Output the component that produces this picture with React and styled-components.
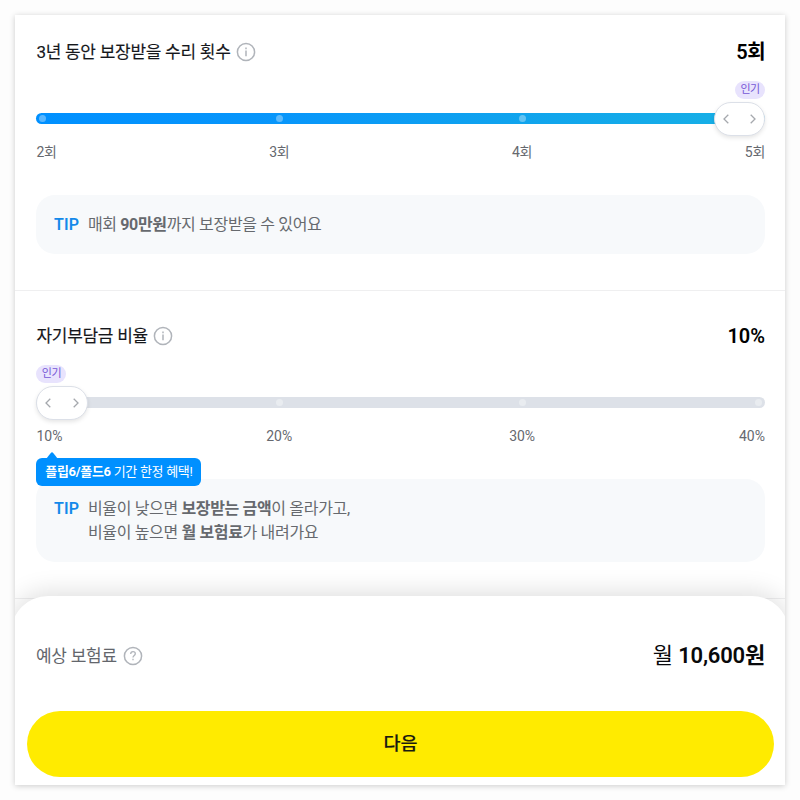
import React from "react";
import styled, { createGlobalStyle } from "styled-components";

const GlobalStyle = createGlobalStyle`
  * { box-sizing: border-box; }
  body {
    margin: 0;
    background: #fdfdfd;
    font-family: Roboto, "Noto Sans CJK KR", sans-serif;
    color: #111317;
  }
`;

const Page = styled.div`
  height: 800px;
  padding: 15px;
`;

const Card = styled.main`
  display: flex;
  flex-direction: column;
  height: 770px;
  overflow: hidden;
  background: #fff;
  box-shadow: 0 1px 6px rgba(0, 0, 0, 0.2);
`;

const Section = styled.section`
  flex: none;
  height: ${(p) => p.$height}px;
  padding: ${(p) => p.$top}px 20px 0 21.4px;
  border-bottom: 1px solid #efeff0;
`;

const Header = styled.header`
  display: flex;
  align-items: center;
  justify-content: space-between;
  height: 30px;
`;

const TitleGroup = styled.div`
  display: flex;
  align-items: center;
  gap: ${(p) => p.$gap || 5}px;
`;

const Title = styled.h2`
  margin: 0;
  font-size: 17px;
  line-height: 30px;
  font-weight: 400;
  letter-spacing: -0.27px;
  color: ${(p) => (p.$muted ? "#63666c" : "#15171b")};
  -webkit-text-stroke: ${(p) => (p.$muted ? 0 : 0.15)}px currentColor;
`;

const Value = styled.strong`
  font-size: 20px;
  line-height: 30px;
  font-weight: 600;
  letter-spacing: ${(p) => p.$tracking || 0}px;
  color: #000;
`;

const IconSvg = styled.svg`
  display: block;
  width: 20px;
  height: 20px;
  fill: none;
  stroke: #b0b4ba;
  stroke-width: 1.5;
`;

const BadgeRow = styled.div`
  display: flex;
  justify-content: ${(p) => (p.$end ? "flex-end" : "flex-start")};
  margin-top: 13.5px;
`;

const Badge = styled.span`
  width: 30px;
  height: 18px;
  border-radius: 9px;
  background: #e8e3fd;
  color: #7657d6;
  font-size: 11px;
  line-height: 18px;
  letter-spacing: -0.6px;
  text-align: center;
`;

const Slider = styled.div`
  display: grid;
  align-items: center;
  height: 34px;
  margin-top: 3px;
  > * { grid-area: 1 / 1; }
`;

/* Stops sit on thirds of the track, with the outer two flush to its ends. */
const Stops = styled.div`
  display: grid;
  grid-template-columns: 1fr 2fr 2fr 1fr;
  justify-items: center;
  > :first-child { justify-self: start; }
  > :last-child { justify-self: end; }
`;

const Track = styled(Stops)`
  align-items: center;
  height: 11px;
  border-radius: 6px;
  background: ${(p) => (p.$filled ? "linear-gradient(90deg, #0090ff 0%, #0896fa 34%, #10a4ed 67%, #18b1e5 100%)" : "#dde1e8")};
`;

const Dot = styled.i`
  width: 7px;
  height: 7px;
  margin: 0 3px;
  border-radius: 50%;
  background: ${(p) => (p.$filled ? "rgba(255,255,255,.35)" : "#e9ecf0")};
`;

const Thumb = styled.div`
  display: flex;
  align-items: center;
  justify-content: space-between;
  justify-self: ${(p) => (p.$end ? "end" : "start")};
  width: 51.5px;
  height: 34px;
  padding: 0 8px;
  border: 1px solid #dce0e8;
  border-radius: 17px;
  background: #fff;
  box-shadow: 0 2px 4px rgba(0, 0, 0, 0.1);
`;

const Chevron = styled.svg`
  width: 6px;
  height: 10px;
  fill: none;
  stroke: #a5a8ad;
  stroke-width: 1.3;
`;

const Labels = styled(Stops)`
  height: 22px;
  margin-top: 5px;
  font-size: 14px;
  line-height: 22px;
  color: #66696f;
  letter-spacing: ${(p) => p.$tracking}px;
`;

const Callout = styled.div`
  position: absolute;
  left: 0;
  top: -21px;
  width: 165px;
  height: 28px;
  border-radius: 6px;
  background: #0090ff;
  color: #fff;
  font-size: 13px;
  line-height: 27px;
  text-align: center;
  white-space: nowrap;
  letter-spacing: -0.3px;
`;

const CalloutTip = styled.svg`
  position: absolute;
  left: 10px;
  top: -6px;
  width: 12px;
  height: 7px;
  fill: #0090ff;
`;

const Tip = styled.div`
  position: relative;
  display: flex;
  margin-top: 32px;
  height: ${(p) => p.$height}px;
  padding: 18px 17.5px 0;
  border-radius: 19px;
  background: #f7f9fb;
  font-size: 16px;
  line-height: 24.5px;
  color: #66696e;
`;

const TipTag = styled.span`
  width: 34px;
  color: #1389ea;
  font-weight: 600;
  letter-spacing: 0.2px;
`;

const TipText = styled.p`
  margin: 0;
  letter-spacing: -0.34px;
`;

const Sheet = styled.footer`
  position: relative;
  flex: none;
  height: 189px;
  margin: -3px -4px 0;
  padding: 45px 15px 0 16px;
  border-radius: 37px 37px 0 0;
  background: #fff;
  box-shadow: 0 -4px 24px rgba(0, 0, 0, 0.13);
`;

const PriceRow = styled(Header)`
  padding: 0 9px;
`;

const Price = styled.span`
  font-size: 22px;
  line-height: 30px;
  letter-spacing: -0.2px;
  color: #08090b;
  b { font-weight: 600; }
`;

const NextButton = styled.button`
  display: block;
  width: 747px;
  height: 66px;
  margin-top: 40px;
  padding: 0;
  border: 0;
  border-radius: 33px;
  background: #ffeb00;
  font: 500 18.5px/66px Roboto, "Noto Sans CJK KR", sans-serif;
  color: #191a10;
  -webkit-text-stroke: 0.15px currentColor;
`;

function InfoIcon() {
  return (
    <IconSvg viewBox="0 0 20 20">
      <circle cx="10" cy="10" r="8.6" />
      <path d="M10 8.6v5.6M10 5.6v1.6" />
    </IconSvg>
  );
}

function HelpIcon() {
  return (
    <IconSvg viewBox="0 0 20 20">
      <circle cx="10" cy="10" r="8.6" />
      <path d="M7.7 8c0-1.4 1-2.3 2.3-2.3s2.3.8 2.3 2c0 1.8-2.3 1.8-2.3 3.9M10 12.8v1.5" strokeWidth="1.3" />
    </IconSvg>
  );
}

function RangeSlider({ labels, filled, end, tracking }) {
  return (
    <>
      <BadgeRow $end={end}><Badge>인기</Badge></BadgeRow>
      <Slider>
        <Track $filled={filled}>
          {labels.map((l) => <Dot key={l} $filled={filled} />)}
        </Track>
        <Thumb $end={end}>
          <Chevron viewBox="0 0 6 10"><path d="M5.3.8 1 5l4.3 4.2" /></Chevron>
          <Chevron viewBox="0 0 6 10"><path d="M.7.8 5 5 .7 9.2" /></Chevron>
        </Thumb>
      </Slider>
      <Labels $tracking={tracking}>
        {labels.map((l) => <span key={l}>{l}</span>)}
      </Labels>
    </>
  );
}

export default function App() {
  return (
    <Page>
      <GlobalStyle />
      <Card>
        <Section $height={276} $top={22}>
          <Header>
            <TitleGroup><Title>3년 동안 보장받을 수리 횟수</Title><InfoIcon /></TitleGroup>
            <Value $tracking={-0.6}>5회</Value>
          </Header>
          <RangeSlider labels={["2회", "3회", "4회", "5회"]} filled end tracking={-0.3} />
          <Tip $height={59}>
            <TipTag>TIP</TipTag>
            <TipText>매회 <b>90만원</b>까지 보장받을 수 있어요</TipText>
          </Tip>
        </Section>
        <Section $height={308} $top={30}>
          <Header>
            <TitleGroup><Title>자기부담금 비율</Title><InfoIcon /></TitleGroup>
            <Value>10%</Value>
          </Header>
          <RangeSlider labels={["10%", "20%", "30%", "40%"]} tracking={0} />
          <Tip $height={83}>
            <TipTag>TIP</TipTag>
            <TipText>
              비율이 낮으면 <b>보장받는 금액</b>이 올라가고,<br />
              비율이 높으면 <b>월 보험료</b>가 내려가요
            </TipText>
            <Callout>
              <CalloutTip viewBox="0 0 12 7"><path d="M0 7 4.8 1Q6-.4 7.2 1L12 7Z" /></CalloutTip>
              <b>플립6/폴드6</b> 기간 한정 혜택!
            </Callout>
          </Tip>
        </Section>
        <Sheet>
          <PriceRow>
            <TitleGroup $gap={6}><Title $muted>예상 보험료</Title><HelpIcon /></TitleGroup>
            <Price>월 <b>10,600원</b></Price>
          </PriceRow>
          <NextButton>다음</NextButton>
        </Sheet>
      </Card>
    </Page>
  );
}
